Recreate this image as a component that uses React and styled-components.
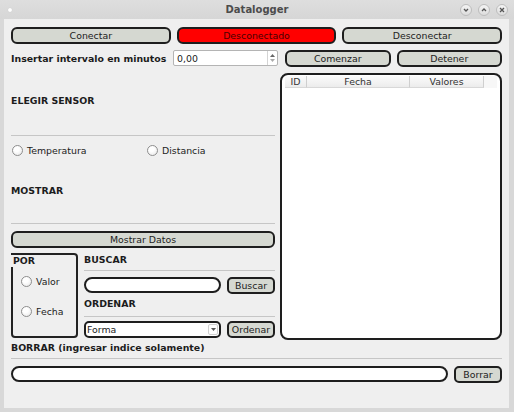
import React from "react";
import styled, { createGlobalStyle } from "styled-components";

const GlobalStyle = createGlobalStyle`
  html, body { margin: 0; padding: 0; background: #d8d8d8; }
  body {
    font-family: "DejaVu Sans", "Liberation Sans", sans-serif;
    font-size: 9.4px;
    color: #1c1c1c;
  }
  * { box-sizing: border-box; }
`;

const Window = styled.div`
  width: 514px;
  height: 412px;
  display: flex;
  flex-direction: column;
  background: #d8d8d8;
`;

const TitleBar = styled.div`
  height: 19px;
  display: grid;
  grid-template-columns: 1fr auto 1fr;
  align-items: center;
  background: linear-gradient(#dedede, #d6d6d6);
`;

const Dot = styled.span`
  width: 4px;
  height: 4px;
  border-radius: 50%;
  background: #ffffff;
  margin-left: 8px;
  box-shadow: 0 0 1px #bbb;
`;

const Title = styled.div`
  font-weight: bold;
  font-size: 10px;
  color: #4c4c4c;
`;

const Controls = styled.div`
  display: flex;
  justify-content: flex-end;
  gap: 6px;
  padding-right: 6px;
`;

const CtrlBtn = styled.span`
  width: 12px;
  height: 12px;
  border-radius: 50%;
  border: 1px solid #bdbdbd;
  background: linear-gradient(#f4f4f4, #dcdcdc);
  display: flex;
  align-items: center;
  justify-content: center;
`;

const Content = styled.div`
  flex: 1;
  margin: 0 5px 4px 4px;
  background: #efefef;
  padding: 8px 7px 0 7px;
  display: flex;
  flex-direction: column;
`;

const TopRow = styled.div`
  display: grid;
  grid-template-columns: 1fr 1fr 1fr;
  gap: 6px;
`;

const Button = styled.button`
  height: ${(p) => p.$h || 17}px;
  width: ${(p) => (p.$w ? p.$w + "px" : "auto")};
  flex: ${(p) => (p.$w ? "none" : "1")};
  margin: 0;
  padding: 0;
  border: 2px solid #1e1e1e;
  border-radius: ${(p) => p.$r || 6}px;
  background: ${(p) => (p.$red ? "#ff0000" : "#d5d8d1")};
  color: ${(p) => (p.$red ? "#4a0000" : "#1c1c1c")};
  font-family: inherit;
  font-size: 9.4px;
  line-height: 1;
`;

const Middle = styled.div`
  display: flex;
  margin-top: 5px;
`;

const LeftCol = styled.div`
  width: 267px;
  display: flex;
  flex-direction: column;
`;

const RightCol = styled.div`
  flex: 1;
  display: flex;
  flex-direction: column;
`;

const ButtonPair = styled.div`
  display: flex;
  gap: 6px;
  margin-top: 1px;
  padding-left: 7px;
`;

const IntervalRow = styled.div`
  height: 18px;
  display: flex;
  align-items: center;
`;

const Bold = styled.span`
  font-weight: bold;
`;

const Spinner = styled.div`
  margin-left: auto;
  width: 105px;
  height: 16px;
  background: #fff;
  border: 1px solid #b4b4b4;
  border-radius: 2px;
  display: flex;
  align-items: center;
`;

const SpinText = styled.span`
  flex: 1;
  padding-left: 3px;
`;

const SpinArrows = styled.div`
  width: 10px;
  height: 100%;
  border-left: 1px solid #d4d4d4;
  display: flex;
  flex-direction: column;
  align-items: center;
  justify-content: center;
  gap: 2px;
`;

const Inner = styled.div`
  padding-right: 3px;
  display: flex;
  flex-direction: column;
`;

const SectionLabel = styled.div`
  font-weight: bold;
  line-height: ${(p) => p.$lh || 14}px;
  margin-top: ${(p) => p.$mt || 0}px;
`;

const Separator = styled.div`
  height: 1px;
  background: #c6c6c6;
  margin-top: ${(p) => p.$mt || 0}px;
`;

const RadioRow = styled.div`
  display: flex;
  height: 14px;
  margin-top: ${(p) => p.$mt || 0}px;
`;

const RadioItem = styled.label`
  display: flex;
  align-items: center;
  gap: 4px;
  width: ${(p) => (p.$w ? p.$w + "px" : "auto")};
  padding-left: 1px;
  height: 14px;
`;

const RadioCircle = styled.span`
  width: 11px;
  height: 11px;
  border-radius: 50%;
  border: 1px solid #8e8e8e;
  background: radial-gradient(circle at 40% 35%, #ffffff 30%, #e4e4e4 100%);
`;

const WideButton = styled(Button)`
  width: 100%;
  flex: none;
  margin-top: 7px;
`;

const Lower = styled.div`
  display: flex;
  margin-top: 5px;
  height: 85px;
`;

const PorBox = styled.div`
  position: relative;
  width: 67px;
  border: 2px solid #222;
  border-radius: 0 4px 4px 4px;
  display: flex;
  flex-direction: column;
  padding: 19px 0 0 7px;
  gap: 16px;
`;

const PorLabel = styled.span`
  position: absolute;
  top: 0;
  left: -2px;
  padding: 0 2px;
  background: #efefef;
  font-weight: bold;
  line-height: 12px;
`;

const LowerRight = styled.div`
  flex: 1;
  margin-left: 6px;
  display: flex;
  flex-direction: column;
`;

const FieldRow = styled.div`
  display: flex;
  gap: 6px;
  margin-top: ${(p) => p.$mt || 0}px;
`;

const TextInput = styled.div`
  flex: 1;
  height: 16px;
  background: #fff;
  border: 2px solid #1e1e1e;
  border-radius: 8px;
`;

const Select = styled.div`
  flex: 1;
  height: 17px;
  background: #fff;
  border: 2px solid #1e1e1e;
  border-radius: 5px;
  display: flex;
  align-items: center;
  padding: 0 1px 0 1px;
`;

const SelectText = styled.span`
  flex: 1;
`;

const SelectArrow = styled.span`
  width: 10px;
  height: 11px;
  border: 1px solid #d0d0d0;
  border-radius: 2px;
  display: flex;
  align-items: center;
  justify-content: center;
`;

const Table = styled.div`
  margin: 6px 0 0 2px;
  height: 267px;
  border: 2px solid #1e1e1e;
  border-radius: 8px;
  background: #fff;
  padding: 1px 3px 0 3px;
  display: flex;
  flex-direction: column;
`;

const HeaderRow = styled.div`
  display: flex;
  height: 12px;
  background: #f7f7f7;
`;

const HeadCell = styled.div`
  width: ${(p) => p.$w}px;
  height: 12px;
  line-height: 12px;
  text-align: center;
  color: #333;
  background: linear-gradient(#fbfbfb, #ececec);
  border-right: 1px solid #cfcfcf;
  border-bottom: 1px solid #d8d8d8;
`;

const Bottom = styled.div`
  display: flex;
  flex-direction: column;
`;

const Chevron = ({ d }) => (
  <svg width="6" height="6" viewBox="0 0 6 6">
    <path d={d} fill="none" stroke="#555" strokeWidth="1.3" />
  </svg>
);

const Tri = ({ up, color = "#777" }) => (
  <svg width="5" height="3" viewBox="0 0 5 3">
    <path d={up ? "M0 3 L2.5 0 L5 3 Z" : "M0 0 L2.5 3 L5 0 Z"} fill={color} />
  </svg>
);

const Radio = ({ label, w }) => (
  <RadioItem $w={w}>
    <RadioCircle />
    <span>{label}</span>
  </RadioItem>
);

export default function App() {
  return (
    <>
      <GlobalStyle />
      <Window>
        <TitleBar>
          <Dot />
          <Title>Datalogger</Title>
          <Controls>
            <CtrlBtn><Chevron d="M1 2 L3 4 L5 2" /></CtrlBtn>
            <CtrlBtn><Chevron d="M1 4 L3 2 L5 4" /></CtrlBtn>
            <CtrlBtn><Chevron d="M1 1 L5 5 M5 1 L1 5" /></CtrlBtn>
          </Controls>
        </TitleBar>
        <Content>
          <TopRow>
            <Button>Conectar</Button>
            <Button $red>Desconectado</Button>
            <Button>Desconectar</Button>
          </TopRow>
          <Middle>
            <LeftCol>
              <IntervalRow>
                <Bold>Insertar intervalo en minutos</Bold>
                <Spinner>
                  <SpinText>0,00</SpinText>
                  <SpinArrows>
                    <Tri up color="#666" />
                    <Tri color="#aaa" />
                  </SpinArrows>
                </Spinner>
              </IntervalRow>
              <Inner>
                <SectionLabel $mt={27}>ELEGIR SENSOR</SectionLabel>
                <Separator $mt={27} />
                <RadioRow $mt={7}>
                  <Radio label="Temperatura" w={135} />
                  <Radio label="Distancia" />
                </RadioRow>
                <SectionLabel $mt={27}>MOSTRAR</SectionLabel>
                <Separator $mt={25} />
                <WideButton>Mostrar Datos</WideButton>
                <Lower>
                  <PorBox>
                    <PorLabel>POR</PorLabel>
                    <Radio label="Valor" />
                    <Radio label="Fecha" />
                  </PorBox>
                  <LowerRight>
                    <SectionLabel $lh={13}>BUSCAR</SectionLabel>
                    <Separator $mt={4} />
                    <FieldRow $mt={6}>
                      <TextInput />
                      <Button $w={48} $r={5}>Buscar</Button>
                    </FieldRow>
                    <SectionLabel $lh={13} $mt={3}>ORDENAR</SectionLabel>
                    <Separator $mt={6} />
                    <FieldRow $mt={4}>
                      <Select>
                        <SelectText>Forma</SelectText>
                        <SelectArrow><Tri color="#555" /></SelectArrow>
                      </Select>
                      <Button $w={48} $r={5}>Ordenar</Button>
                    </FieldRow>
                  </LowerRight>
                </Lower>
              </Inner>
            </LeftCol>
            <RightCol>
              <ButtonPair>
                <Button>Comenzar</Button>
                <Button>Detener</Button>
              </ButtonPair>
              <Table>
                <HeaderRow>
                  <HeadCell $w={22}>ID</HeadCell>
                  <HeadCell $w={103}>Fecha</HeadCell>
                  <HeadCell $w={74}>Valores</HeadCell>
                </HeaderRow>
              </Table>
            </RightCol>
          </Middle>
          <Bottom>
            <SectionLabel $mt={1}>BORRAR (ingresar indice solamente)</SectionLabel>
            <Separator $mt={3} />
            <FieldRow $mt={7}>
              <TextInput />
              <Button $w={48} $r={5}>Borrar</Button>
            </FieldRow>
          </Bottom>
        </Content>
      </Window>
    </>
  );
}
